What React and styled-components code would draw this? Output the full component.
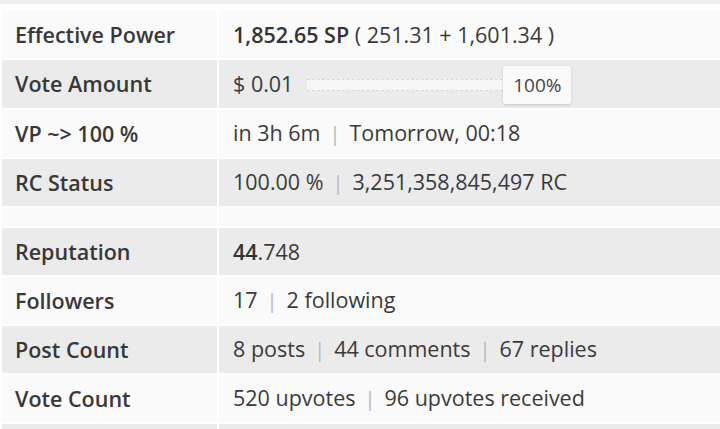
import React from "react";
import styled, { createGlobalStyle } from "styled-components";

const GlobalStyle = createGlobalStyle`
    html, body {
        margin: 0;
        padding: 0;
        background: #fff;
        overflow: hidden;
    }
    body {
        font-family: "Open Sans", "Noto Sans", sans-serif;
        color: #333;
    }
`;

const TopStrip = styled.div`
    height: 4px;
    background: #efefef;
    margin-bottom: 5px;
`;

const Table = styled.table`
    border-collapse: separate;
    border-spacing: 2px;
    width: 724px;
    table-layout: fixed;
    margin-left: 0;
`;

const Row = styled.tr`
    td {
        background: ${(p) => (p.$shade ? "#ebebeb" : "#fafafa")};
        height: ${(p) => (p.$tall ? "48px" : "47px")};
        vertical-align: middle;
        font-size: 21.5px;
        line-height: 26px;
    }
`;

const SpacerRow = styled.tr`
    td {
        background: #fafafa;
        height: 18px;
        padding: 0;
    }
`;

const Label = styled.td`
    width: 189px;
    padding: 0 13px;
    font-weight: 600;
    color: #383838;
    white-space: nowrap;
`;

const Value = styled.td`
    padding: 0 14px;
    color: #3a3a3a;
    white-space: nowrap;
`;

const Strong = styled.span`
    font-weight: 600;
    color: #333;
`;

const Sep = styled.span`
    color: #b8b8b8;
    margin: 0 9px;
    font-size: 20px;
`;

const SliderWrap = styled.div`
    display: flex;
    align-items: center;
    gap: 14px;
`;

const Track = styled.div`
    position: relative;
    width: 196px;
    height: 10px;
    background: #f6f6f6;
    border-top: 1px dashed #d8d8d8;
    border-bottom: 1px dashed #d8d8d8;
    margin-top: 1px;
`;

const Handle = styled.div`
    position: absolute;
    left: 196px;
    top: 50%;
    transform: translateY(-50%);
    width: 68px;
    height: 38px;
    display: flex;
    align-items: center;
    justify-content: center;
    background: #fafafa;
    border-radius: 3px;
    box-shadow: 0 1px 3px rgba(0, 0, 0, 0.15);
    font-size: 19px;
    color: #444;
`;

const rows = [
    {
        label: "Effective Power",
        value: (
            <>
                <Strong>1,852.65 SP</Strong> ( 251.31 + 1,601.34 )
            </>
        ),
    },
    { label: "Vote Amount", slider: true },
    { label: "VP ~> 100 %", parts: ["in 3h 6m", "Tomorrow, 00:18"] },
    { label: "RC Status", parts: ["100.00 %", "3,251,358,845,497 RC"] },
    { spacer: true },
    {
        label: "Reputation",
        value: (
            <>
                <Strong>44</Strong>.748
            </>
        ),
    },
    { label: "Followers", parts: ["17", "2 following"] },
    { label: "Post Count", parts: ["8 posts", "44 comments", "67 replies"] },
    { label: "Vote Count", parts: ["520 upvotes", "96 upvotes received"] },
    { label: "", parts: [""] },
];

const App = () => {
    return (
        <>
            <GlobalStyle />
            <TopStrip />
            <Table>
                <tbody>
                    {rows.map((row, i) =>
                        row.spacer ? (
                            <SpacerRow key={i}>
                                <td />
                                <td />
                            </SpacerRow>
                        ) : (
                            <Row key={i} $shade={i % 2 === 1} $tall={row.slider}>
                                <Label>{row.label}</Label>
                                <Value>
                                    {row.slider ? (
                                        <SliderWrap>
                                            <span>$ 0.01</span>
                                            <Track>
                                                <Handle>100%</Handle>
                                            </Track>
                                        </SliderWrap>
                                    ) : row.parts ? (
                                        row.parts.map((p, j) => (
                                            <React.Fragment key={j}>
                                                {j > 0 && <Sep>|</Sep>}
                                                {p}
                                            </React.Fragment>
                                        ))
                                    ) : (
                                        row.value
                                    )}
                                </Value>
                            </Row>
                        )
                    )}
                </tbody>
            </Table>
        </>
    );
};

export default App;
